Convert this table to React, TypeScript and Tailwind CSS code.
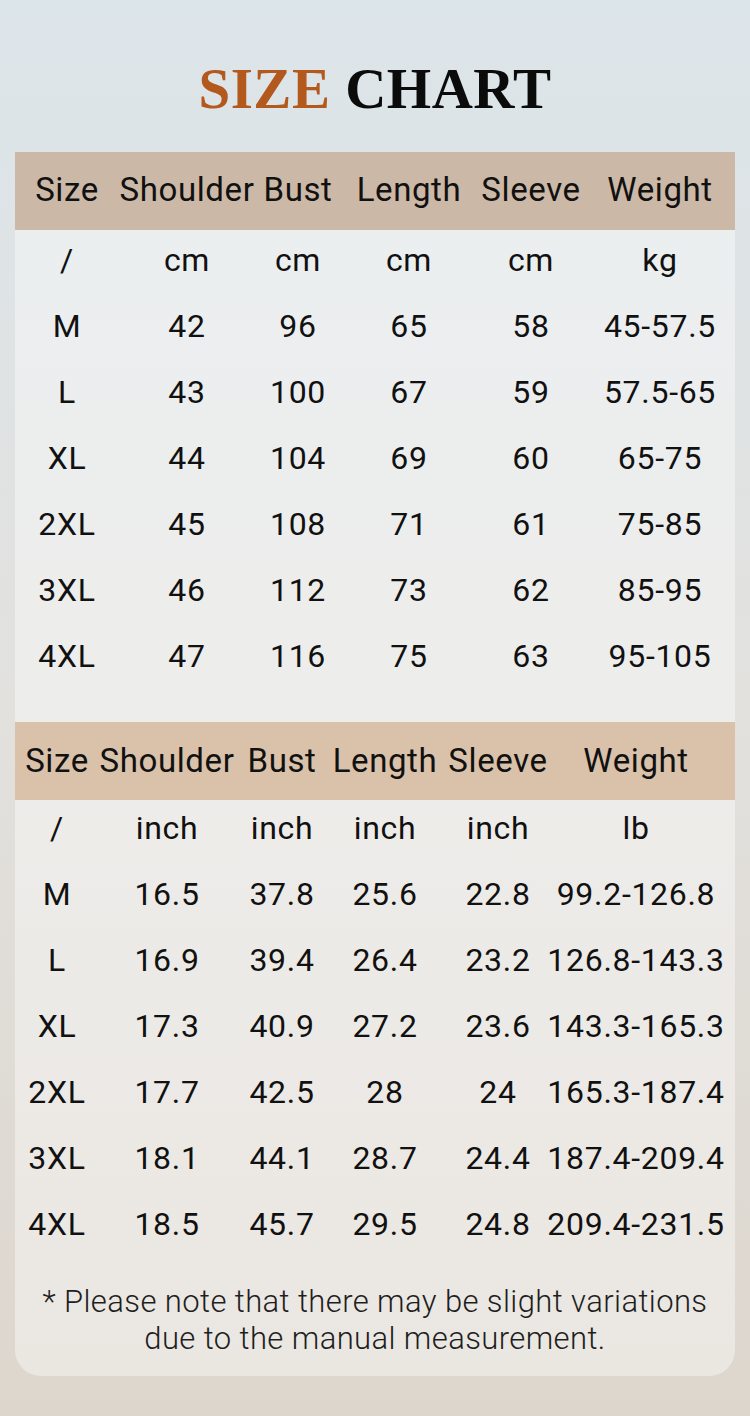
import React from "react";

const t1Cols = "grid grid-cols-[104px_136px_86px_136px_108px_150px]";
const t2Cols = "grid grid-cols-[84px_136px_94px_112px_114px_162px]";

const t1Head = ["Size", "Shoulder", "Bust", "Length", "Sleeve", "Weight"];
const t1Rows = [
  ["/", "cm", "cm", "cm", "cm", "kg"],
  ["M", "42", "96", "65", "58", "45-57.5"],
  ["L", "43", "100", "67", "59", "57.5-65"],
  ["XL", "44", "104", "69", "60", "65-75"],
  ["2XL", "45", "108", "71", "61", "75-85"],
  ["3XL", "46", "112", "73", "62", "85-95"],
  ["4XL", "47", "116", "75", "63", "95-105"],
];
const t2Rows = [
  ["/", "inch", "inch", "inch", "inch", "lb"],
  ["M", "16.5", "37.8", "25.6", "22.8", "99.2-126.8"],
  ["L", "16.9", "39.4", "26.4", "23.2", "126.8-143.3"],
  ["XL", "17.3", "40.9", "27.2", "23.6", "143.3-165.3"],
  ["2XL", "17.7", "42.5", "28", "24", "165.3-187.4"],
  ["3XL", "18.1", "44.1", "28.7", "24.4", "187.4-209.4"],
  ["4XL", "18.5", "45.7", "29.5", "24.8", "209.4-231.5"],
];

function Cell({ children }: { children: React.ReactNode }) {
  return (
    <div className="flex items-center justify-center whitespace-nowrap">{children}</div>
  );
}

export default function App() {
  return (
    <div
      className="w-[750px] h-[1416px] overflow-hidden bg-linear-to-b from-[#dce5ea] via-[#e2e1de] to-[#ddd6cd] text-[#111111]"
      style={{ fontFamily: "Roboto, 'Noto Sans', sans-serif" }}
    >
      <div
        className="pt-[60px] h-[117px] text-center text-[57px] leading-[57px] font-bold tracking-[0.5px]"
        style={{ fontFamily: "'Liberation Serif', 'Times New Roman', serif" }}
      >
        <span className="text-[#b3591d]">SIZE</span>{" "}
        <span className="text-[#0b0b0b]">CHART</span>
      </div>

      <div className="mx-[15px] mt-[35px] rounded-b-[26px] bg-white/40 text-[32px] tracking-[0.7px]">
        <div className={`${t1Cols} h-[78px] bg-[#ccb8a6] pb-[2px] text-[33px] tracking-[0.6px]`}>
          {t1Head.map((h) => (
            <Cell key={h}>{h}</Cell>
          ))}
        </div>
        {t1Rows.map((r, i) => (
          <div key={i} className={`${t1Cols} h-[66px] pb-[6px]`}>
            {r.map((c, j) => (
              <Cell key={j}>{c}</Cell>
            ))}
          </div>
        ))}

        <div className={`${t2Cols} mt-[30px] h-[78px] bg-[#d9c1aa] text-[33px] tracking-[0.6px]`}>
          {t1Head.map((h) => (
            <Cell key={h}>{h}</Cell>
          ))}
        </div>
        {t2Rows.map((r, i) => (
          <div key={i} className={`${t2Cols} h-[66px] pb-[10px]`}>
            {r.map((c, j) => (
              <Cell key={j}>{c}</Cell>
            ))}
          </div>
        ))}

        <div className="pt-[21px] pb-[19px] text-center text-[31px] leading-[37px] font-light tracking-[0.4px] text-[#1e1e1e]">
          <div>* Please note that there may be slight variations</div>
          <div>due to the manual measurement.</div>
        </div>
      </div>
    </div>
  );
}
